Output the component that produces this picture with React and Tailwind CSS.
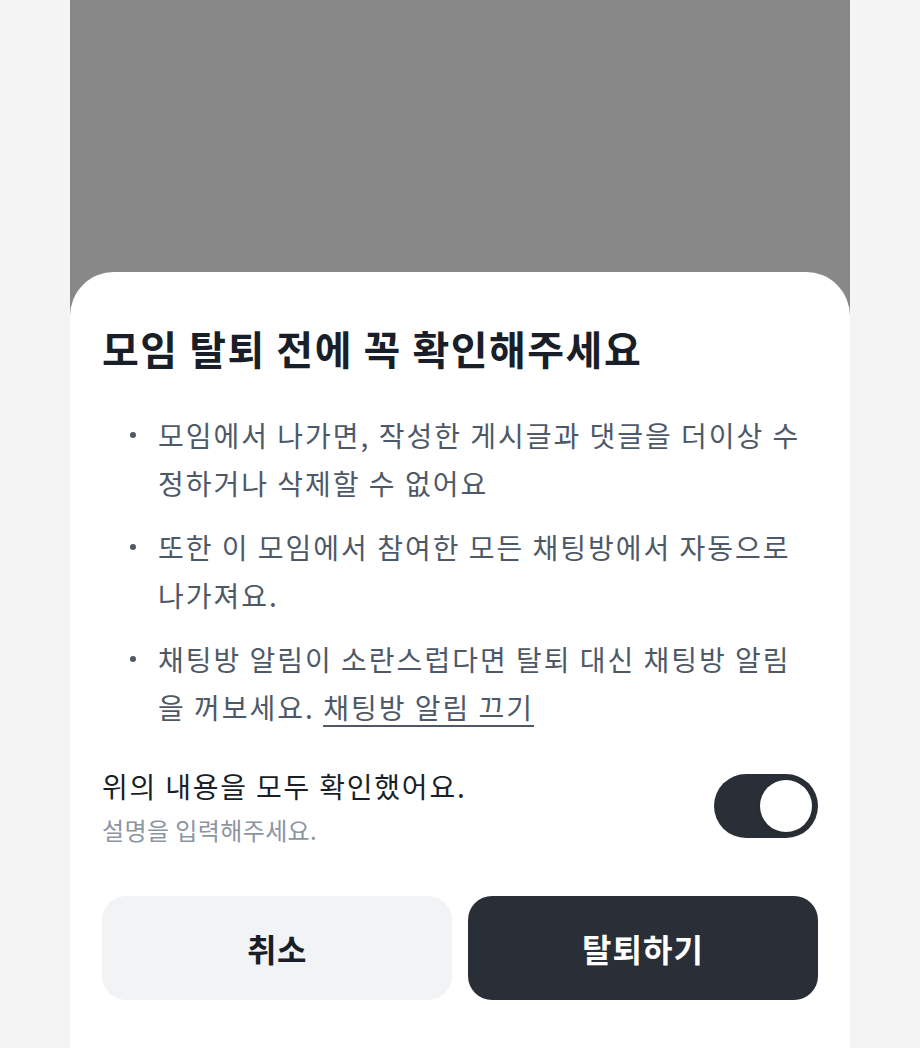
export default function App() {
  const font = { fontFamily: '"Noto Sans CJK KR", "Noto Sans", sans-serif' };
  return (
    <div className="min-h-[1048px] w-full bg-[#f4f4f4] flex justify-center" style={font}>
      <div className="w-[780px] min-h-[1048px] bg-[#888888] flex flex-col">
        <div className="h-[272px] shrink-0" />
        <div className="flex-1 bg-white rounded-t-[44px] px-8 pt-12">
          <h1 className="text-[40px] leading-[56px] font-bold text-[#191f28] tracking-[1.5px]">
            모임 탈퇴 전에 꼭 확인해주세요
          </h1>
          <ul className="mt-[35px] flex flex-col gap-4 text-[28px] leading-[48px] text-[#4e5968] tracking-[2px]">
            <li className="flex">
              <span className="w-[56px] shrink-0 flex items-start pl-[28px] pt-[21px]">
                <span className="w-[6px] h-[6px] rounded-full bg-[#4e5968]" />
              </span>
              <span>모임에서 나가면, 작성한 게시글과 댓글을 더이상 수정하거나 삭제할 수 없어요</span>
            </li>
            <li className="flex">
              <span className="w-[56px] shrink-0 flex items-start pl-[28px] pt-[21px]">
                <span className="w-[6px] h-[6px] rounded-full bg-[#4e5968]" />
              </span>
              <span>또한 이 모임에서 참여한 모든 채팅방에서 자동으로 나가져요.</span>
            </li>
            <li className="flex">
              <span className="w-[56px] shrink-0 flex items-start pl-[28px] pt-[21px]">
                <span className="w-[6px] h-[6px] rounded-full bg-[#4e5968]" />
              </span>
              <span>
                채팅방 알림이 소란스럽다면 탈퇴 대신 채팅방 알림을 꺼보세요.{' '}
                <span className="underline underline-offset-[6px] decoration-[2px]">채팅방 알림 끄기</span>
              </span>
            </li>
          </ul>
          <div className="mt-[35px] flex items-center justify-between">
            <div className="flex flex-col">
              <span className="text-[28px] leading-[40px] text-[#191f28] tracking-[1.8px]">위의 내용을 모두 확인했어요.</span>
              <span className="mt-2 text-[24px] leading-[32px] text-[#8b95a1] tracking-[0.4px]">설명을 입력해주세요.</span>
            </div>
            <div className="w-[104px] h-[64px] rounded-full bg-[#2a2f37] flex items-center justify-end pr-[6px]">
              <div className="w-[52px] h-[52px] rounded-full bg-white shadow-[0_2px_6px_rgba(0,0,0,0.15)]" />
            </div>
          </div>
          <div className="mt-[50px] flex gap-4">
            <button className="flex-1 h-[104px] rounded-[24px] bg-[#f2f3f5] text-[32px] font-bold text-[#191f28] tracking-[0.5px]">
              취소
            </button>
            <button className="flex-1 h-[104px] rounded-[24px] bg-[#2a2f37] text-[32px] font-bold text-white tracking-[1px]">
              탈퇴하기
            </button>
          </div>
        </div>
      </div>
    </div>
  );
}
